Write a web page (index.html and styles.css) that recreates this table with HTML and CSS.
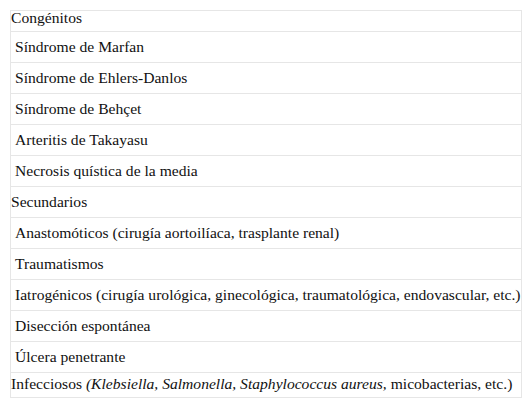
FILE: index.html
```html
<!DOCTYPE html>
<html lang="es">
<head>
<meta charset="utf-8">
<link rel="stylesheet" href="styles.css">
</head>
<body>
<table class="tbl">
  <tr class="cat first"><td>Congénitos</td></tr>
  <tr class="item"><td>Síndrome de Marfan</td></tr>
  <tr class="item"><td>Síndrome de Ehlers-Danlos</td></tr>
  <tr class="item"><td>Síndrome de Behçet</td></tr>
  <tr class="item"><td>Arteritis de Takayasu</td></tr>
  <tr class="item"><td>Necrosis quística de la media</td></tr>
  <tr class="cat"><td>Secundarios</td></tr>
  <tr class="item"><td>Anastomóticos (cirugía aortoilíaca, trasplante renal)</td></tr>
  <tr class="item"><td>Traumatismos</td></tr>
  <tr class="item"><td>Iatrogénicos (cirugía urológica, ginecológica, traumatológica, endovascular, etc.)</td></tr>
  <tr class="item"><td>Disección espontánea</td></tr>
  <tr class="item"><td>Úlcera penetrante</td></tr>
  <tr class="cat last"><td>Infecciosos <i>(Klebsiella, Salmonella, Staphylococcus aureus,</i> micobacterias, etc.)</td></tr>
</table>
</body>
</html>
```
FILE: styles.css
```css
html, body {
  margin: 0;
  background: #fff;
}
body {
  padding: 10px;
  font-family: "Liberation Serif", "Times New Roman", serif;
  font-size: 15.6px;
  color: #111;
}
.tbl {
  width: 512px;
  border-collapse: collapse;
}
.tbl td {
  border: 1px solid #e6e6e6;
  line-height: 18px;
  padding: 6px 0 6px 4px;
  white-space: nowrap;
}
.cat td {
  padding-left: 0;
}
.first td {
  line-height: 14px;
  padding-top: 0;
  padding-bottom: 6px;
}
.last td {
  padding-top: 2px;
  padding-bottom: 4px;
}
```
